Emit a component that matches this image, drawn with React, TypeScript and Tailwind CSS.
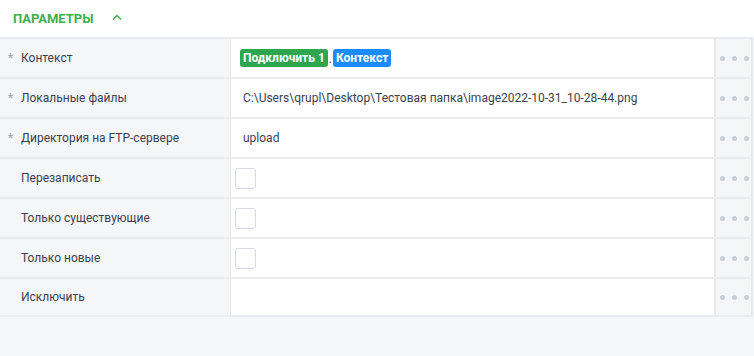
import React from "react";

type Row = { label: string; req?: boolean; kind: "ctx" | "text" | "check" | "empty"; value?: string };

const rows: Row[] = [
  { label: "Контекст", req: true, kind: "ctx" },
  { label: "Локальные файлы", req: true, kind: "text", value: "C:\\Users\\qrupl\\Desktop\\Тестовая папка\\image2022-10-31_10-28-44.png" },
  { label: "Директория на FTP-сервере", req: true, kind: "text", value: "upload" },
  { label: "Перезаписать", kind: "check" },
  { label: "Только существующие", kind: "check" },
  { label: "Только новые", kind: "check" },
  { label: "Исключить", kind: "empty" },
];

function Dots() {
  return (
    <div className="flex items-center justify-center gap-[7px] pl-[2px]">
      <span className="w-[5px] h-[5px] rounded-full bg-[#c9cdd8]" />
      <span className="w-[5px] h-[5px] rounded-full bg-[#c9cdd8]" />
      <span className="w-[5px] h-[5px] rounded-full bg-[#c9cdd8]" />
    </div>
  );
}

export default function App() {
  return (
    <div className="w-[754px] h-[356px] bg-[#f5f6f8] text-[12px]" style={{ fontFamily: "Roboto, 'Liberation Sans', sans-serif" }}>
      <div className="h-[37px] bg-white flex items-center pl-[13px]">
        <span className="text-[#3cb04a] font-bold text-[13px] tracking-[0px]">ПАРАМЕТРЫ</span>
        <svg className="ml-[18px] mt-[-2px]" width="10" height="7" viewBox="0 0 10 7">
          <path d="M1 5.5 L5 1.5 L9 5.5" fill="none" stroke="#3cb04a" strokeWidth="1.5" />
        </svg>
      </div>
      <div className="w-[753px]">
        {rows.map((r, i) => (
          <div key={i} className={"flex h-[40px] border-t-2 border-[#e9ebef]" + (i === rows.length - 1 ? " border-b-2" : "")}>
            <div className="w-[230px] flex items-center text-[#3a3f52]">
              <span className="w-[21px] pl-[8px] text-[#9aa0ad] text-[12px]">{r.req ? "*" : ""}</span>
              <span>{r.label}</span>
            </div>
            <div className="flex-1 bg-white border-l border-[#e6e8ed] flex items-center">
              {r.kind === "ctx" && (
                <div className="flex items-center pl-[9px] font-bold text-white text-[12px]">
                  <span className="bg-[#2ea650] rounded-[3px] px-[3px] h-[18px] leading-[18px]">Подключить 1</span>
                  <span className="text-[#3a3f52] font-normal px-[1px] leading-[17px] mt-[2px]">.</span>
                  <span className="bg-[#1a8cff] rounded-[3px] px-[3px] h-[18px] leading-[18px]">Контекст</span>
                </div>
              )}
              {r.kind === "text" && <span className="pl-[12px] text-[#3a3f52]">{r.value}</span>}
              {r.kind === "check" && (
                <div className="ml-[4px] w-[21px] h-[21px] rounded-[3px] border border-[#d6d9df] bg-white" />
              )}
            </div>
            <div className="w-[39px] border-l-2 border-r-2 border-[#e6e8ed] flex items-center justify-center bg-[#f5f6f8]">
              <Dots />
            </div>
          </div>
        ))}
      </div>
    </div>
  );
}
